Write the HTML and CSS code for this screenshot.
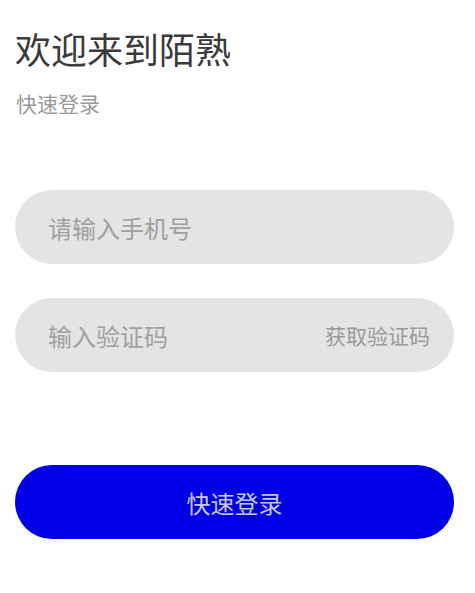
FILE: index.html
```html
<!DOCTYPE html>
<html lang="zh-CN">
<head>
<meta charset="utf-8">
<link rel="stylesheet" href="styles.css">
</head>
<body>
<div class="page">
  <h1 class="title">欢迎来到陌熟</h1>
  <p class="subtitle">快速登录</p>
  <form class="form">
    <div class="field">
      <input class="input" type="text" placeholder="请输入手机号">
    </div>
    <div class="field">
      <input class="input" type="text" placeholder="输入验证码">
      <span class="code-btn">获取验证码</span>
    </div>
    <button type="button" class="submit">快速登录</button>
  </form>
</div>
</body>
</html>
```
FILE: styles.css
```css
html, body {
  margin: 0;
  padding: 0;
  background: #ffffff;
}
body {
  font-family: "Noto Sans CJK SC", "Noto Sans", sans-serif;
}
.page {
  padding: 22px 21px 0 15px;
  display: flex;
  flex-direction: column;
}
.title {
  margin: 0;
  font-size: 36px;
  font-weight: 400;
  line-height: 52px;
  color: #3a3a3a;
}
.subtitle {
  margin: 14px 0 0 1px;
  font-size: 21px;
  line-height: 30px;
  color: #9a9a9a;
}
.form {
  margin-top: 72px;
  display: flex;
  flex-direction: column;
}
.field {
  height: 74px;
  border-radius: 37px;
  background: #e4e4e4;
  display: flex;
  align-items: center;
  padding: 0 24px 0 33px;
  margin-bottom: 34px;
}
.input {
  flex: 1;
  min-width: 0;
  border: none;
  outline: none;
  background: transparent;
  font-family: inherit;
  font-size: 24px;
  color: #333;
  padding: 0;
}
.input::placeholder {
  color: #a0a0a0;
}
.code-btn {
  font-size: 21px;
  color: #999999;
  white-space: nowrap;
}
.submit {
  margin-top: 59px;
  height: 74px;
  border: none;
  border-radius: 37px;
  background: #0000e6;
  color: #c8c8d8;
  font-family: inherit;
  font-size: 24px;
  padding: 0;
}
```
